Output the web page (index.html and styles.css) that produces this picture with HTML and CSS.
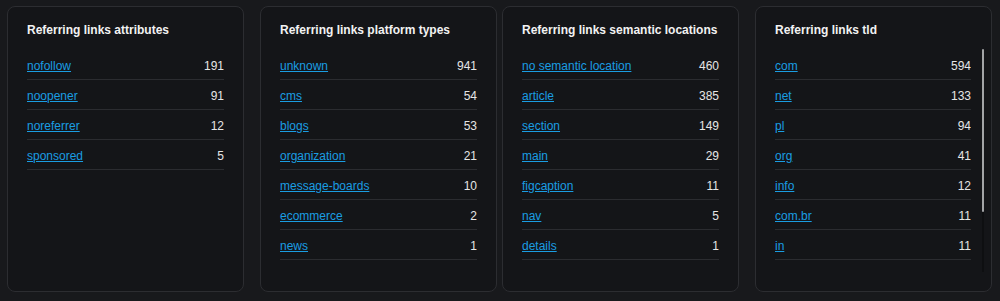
FILE: index.html
```html
<!DOCTYPE html>
<html lang="en">
<head>
  <meta charset="UTF-8">
  <title>Referring links</title>
  <link rel="stylesheet" href="styles.css">
</head>
<body>
  <div class="cards">

    <!-- Attributes -->
    <div class="card">
      <h3>Referring links attributes</h3>
      <ul class="list">
        <li><a href="#">nofollow</a><span>191</span></li>
        <li><a href="#">noopener</a><span>91</span></li>
        <li><a href="#">noreferrer</a><span>12</span></li>
        <li><a href="#">sponsored</a><span>5</span></li>
      </ul>
    </div>

    <!-- Platform types -->
    <div class="card">
      <h3>Referring links platform types</h3>
      <ul class="list">
        <li><a href="#">unknown</a><span>941</span></li>
        <li><a href="#">cms</a><span>54</span></li>
        <li><a href="#">blogs</a><span>53</span></li>
        <li><a href="#">organization</a><span>21</span></li>
        <li><a href="#">message-boards</a><span>10</span></li>
        <li><a href="#">ecommerce</a><span>2</span></li>
        <li><a href="#">news</a><span>1</span></li>
      </ul>
    </div>

    <!-- Semantic locations -->
    <div class="card">
      <h3>Referring links semantic locations</h3>
      <ul class="list">
        <li><a href="#">no semantic location</a><span>460</span></li>
        <li><a href="#">article</a><span>385</span></li>
        <li><a href="#">section</a><span>149</span></li>
        <li><a href="#">main</a><span>29</span></li>
        <li><a href="#">figcaption</a><span>11</span></li>
        <li><a href="#">nav</a><span>5</span></li>
        <li><a href="#">details</a><span>1</span></li>
      </ul>
    </div>

    <!-- TLD -->
    <div class="card">
      <h3>Referring links tld</h3>
      <ul class="list scroll">
        <li><a href="#">com</a><span>594</span></li>
        <li><a href="#">net</a><span>133</span></li>
        <li><a href="#">pl</a><span>94</span></li>
        <li><a href="#">org</a><span>41</span></li>
        <li><a href="#">info</a><span>12</span></li>
        <li><a href="#">com.br</a><span>11</span></li>
        <li><a href="#">in</a><span>11</span></li>
      </ul>
      <div class="scrollbar"><div class="thumb"></div></div>
    </div>

  </div>
</body>
</html>
```

FILE: styles.css
```css
:root {
  --bg-page: #18191c;
  --bg-card: #141518;
  --border: #2c2d31;
  --line: #2b2c30;
  --text: #f2f2f2;
  --num: #e6e6e6;
  --link: #1a9de2;
}

body {
  margin: 0;
  background: var(--bg-page);
  font-family: "Liberation Sans", Arial, sans-serif;
  color: var(--text);
}

.cards {
  display: flex;
  padding: 6px 0 0 7px;
}

.card {
  position: relative;
  flex: 0 0 237px;
  height: 286px;
  box-sizing: border-box;
  margin-right: 16px;
  padding: 15px 19px 0;
  background: var(--bg-card);
  border: 1px solid var(--border);
  border-radius: 8px;
  overflow: hidden;
}

.card:nth-child(2) {
  margin-right: 5px;
}

h3 {
  margin: 0 0 12px;
  font-size: 12px;
  line-height: 16px;
  font-weight: bold;
  color: var(--text);
  white-space: nowrap;
}

.list {
  list-style: none;
  margin: 0;
  padding: 0;
}

.list li {
  display: flex;
  justify-content: space-between;
  align-items: center;
  box-sizing: border-box;
  height: 30px;
  padding-top: 3px;
  border-bottom: 1px solid var(--line);
  font-size: 12px;
}

.list a {
  color: var(--link);
  text-decoration: underline;
}

.list span {
  color: var(--num);
}

/* tld list scrolls; the bar is drawn by hand since headless hides it */
.scroll {
  height: 214px;
  overflow-y: auto;
  scrollbar-width: none;
  margin-right: 1px;
}

.scroll::-webkit-scrollbar {
  display: none;
}

.scrollbar {
  position: absolute;
  top: 42px;
  right: 7px;
  width: 2px;
  height: 223px;
  background: #0e0f11;
}

.thumb {
  height: 163px;
  background: #a3a4a6;
  border-radius: 1px;
}
```
